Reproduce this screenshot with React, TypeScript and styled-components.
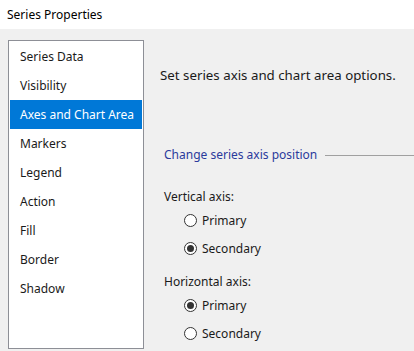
import React from 'react'
import styled, { createGlobalStyle } from 'styled-components'

const GlobalStyle = createGlobalStyle`
  html, body {
    margin: 0;
    padding: 0;
    background: #f0f0f0;
  }
  body {
    font-family: 'Noto Sans', 'Open Sans', sans-serif;
    color: #1a1a1a;
  }
`

const Window = styled.div`
  width: 414px;
  height: 351px;
  display: flex;
  flex-direction: column;
  overflow: hidden;
  background: #f0f0f0;
`

const TitleBar = styled.div`
  height: 29px;
  flex-shrink: 0;
  background: #ffffff;
  display: flex;
  align-items: center;
  padding-left: 7px;
  font-size: 12px;
  color: #000;
`

const Body = styled.div`
  flex: 1;
  display: flex;
  padding: 11px 0 2px 8px;
  min-height: 0;
`

const PageList = styled.ul`
  list-style: none;
  margin: 0;
  padding: 1px 1px;
  width: 132px;
  background: #ffffff;
  border: 1px solid #8d8f96;
  flex-shrink: 0;
`

const PageItem = styled.li<{ selected?: boolean }>`
  height: 29px;
  line-height: 29px;
  padding-left: 10px;
  font-size: 12px;
  white-space: nowrap;
  background: ${({ selected }) => (selected ? '#0078d7' : 'transparent')};
  color: ${({ selected }) => (selected ? '#ffffff' : '#1a1a1a')};
`

const Content = styled.div`
  flex: 1;
  display: flex;
  flex-direction: column;
  padding-left: 16px;
  min-width: 0;
`

const Heading = styled.div`
  margin-top: 25px;
  line-height: 20px;
  font-size: 13.3px;
  white-space: nowrap;
`

const GroupHeader = styled.div`
  margin-top: 61px;
  margin-left: 4px;
  display: flex;
  align-items: center;
  gap: 8px;
  line-height: 18px;
  font-size: 12px;
  color: #2b3a9c;
  white-space: nowrap;

  &::after {
    content: '';
    flex: 1;
    height: 1px;
    background: #a0a0a0;
  }
`

const Fields = styled.div`
  margin-left: 4px;
  display: flex;
  flex-direction: column;
`

const FieldLabel = styled.div<{ gap: number }>`
  margin-top: ${({ gap }) => gap}px;
  line-height: 19px;
  font-size: 12px;
`

const RadioRow = styled.label`
  height: 28px;
  display: flex;
  align-items: center;
  gap: 5px;
  padding-left: 20px;
  font-size: 12px;
`

const RadioDot = styled.span<{ checked?: boolean }>`
  width: 11px;
  height: 11px;
  border-radius: 50%;
  border: 1px solid #333333;
  background: #ffffff;
  display: flex;
  align-items: center;
  justify-content: center;

  &::after {
    content: '';
    width: 7px;
    height: 7px;
    border-radius: 50%;
    background: #333333;
    display: ${({ checked }) => (checked ? 'block' : 'none')};
  }
`

const PAGES = [
  'Series Data',
  'Visibility',
  'Axes and Chart Area',
  'Markers',
  'Legend',
  'Action',
  'Fill',
  'Border',
  'Shadow'
]

function Radio({ label, checked }: { label: string; checked?: boolean }) {
  return (
    <RadioRow>
      <RadioDot checked={checked} />
      {label}
    </RadioRow>
  )
}

export default function App() {
  return (
    <Window>
      <GlobalStyle />
      <TitleBar>Series Properties</TitleBar>
      <Body>
        <PageList>
          {PAGES.map(page => (
            <PageItem key={page} selected={page === 'Axes and Chart Area'}>
              {page}
            </PageItem>
          ))}
        </PageList>
        <Content>
          <Heading>Set series axis and chart area options.</Heading>
          <GroupHeader>Change series axis position</GroupHeader>
          <Fields>
            <FieldLabel gap={23}>Vertical axis:</FieldLabel>
            <Radio label="Primary" />
            <Radio label="Secondary" checked />
            <FieldLabel gap={10}>Horizontal axis:</FieldLabel>
            <Radio label="Primary" checked />
            <Radio label="Secondary" />
          </Fields>
        </Content>
      </Body>
    </Window>
  )
}
